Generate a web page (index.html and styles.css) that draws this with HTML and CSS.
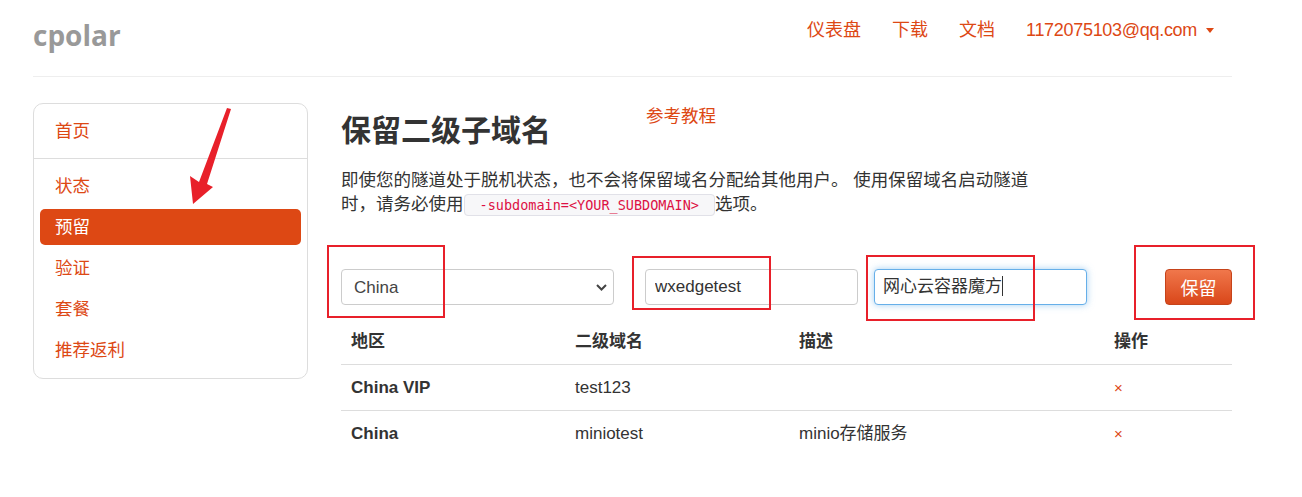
FILE: index.html
```html
<!DOCTYPE html>
<html lang="zh-CN">
<head>
  <meta charset="UTF-8" />
  <title>保留二级子域名 - cpolar</title>
  <link rel="stylesheet" href="styles.css">
</head>
<body>
  <div class="page">
    <header class="topbar">
      <a class="logo" href="#">cpolar</a>
      <nav class="topnav">
        <a href="#">仪表盘</a>
        <a href="#">下载</a>
        <a href="#">文档</a>
        <a href="#" class="user">1172075103@qq.com<span class="caret"></span></a>
      </nav>
    </header>

    <div class="layout">
      <aside class="sidebar">
        <ul>
          <li><a href="#">首页</a></li>
          <li class="divider"></li>
          <li><a href="#">状态</a></li>
          <li class="active"><a href="#">预留</a></li>
          <li><a href="#">验证</a></li>
          <li><a href="#">套餐</a></li>
          <li><a href="#">推荐返利</a></li>
        </ul>
      </aside>

      <main class="content">
        <div class="title-row">
          <h2>保留二级子域名</h2>
          <a class="help" href="#">参考教程</a>
        </div>
        <p class="lead">即使您的隧道处于脱机状态，也不会将保留域名分配给其他用户。 使用保留域名启动隧道时，请务必使用<code>-subdomain=&lt;YOUR_SUBDOMAIN&gt;</code>选项。</p>

        <form class="reserve-form">
          <div class="select-box">
            <select>
              <option>China</option>
              <option>China VIP</option>
            </select>
            <svg class="chevron" width="11" height="7" viewBox="0 0 11 7"><path d="M1 1l4.5 4.5L10 1" fill="none" stroke="#444" stroke-width="2"/></svg>
          </div>
          <input type="text" class="field field-name" value="wxedgetest" />
          <div class="field field-desc focused">网心云容器魔方<span class="cursor"></span></div>
          <button type="submit" class="btn">保留</button>
        </form>

        <table class="domains">
          <thead>
            <tr><th class="c-region">地区</th><th class="c-sub">二级域名</th><th class="c-desc">描述</th><th>操作</th></tr>
          </thead>
          <tbody>
            <tr><td class="strong">China VIP</td><td>test123</td><td></td><td><a class="del" href="#">×</a></td></tr>
            <tr><td class="strong">China</td><td>miniotest</td><td>minio存储服务</td><td><a class="del" href="#">×</a></td></tr>
          </tbody>
        </table>
      </main>
    </div>
  </div>

  <!-- annotations drawn over the screenshot -->
  <div class="mark mark-1"></div>
  <div class="mark mark-2"></div>
  <div class="mark mark-3"></div>
  <div class="mark mark-4"></div>
  <svg class="arrow" width="1302" height="497" viewBox="0 0 1302 497">
    <polygon points="227,108 231,109 207,184 213,187 193,204 190,176 199,182" fill="#e8202a"/>
  </svg>
</body>
</html>
```

FILE: styles.css
```css
body {
  margin: 0;
  font-family: "Liberation Sans", "Noto Sans CJK SC", sans-serif;
  color: #333;
  background: #fff;
  position: relative;
}
a {
  color: #dd4814;
  text-decoration: none;
}
.page {
  width: 1199px;
  margin-left: 33px;
}

/* top bar */
.topbar {
  height: 76px;
  border-bottom: 1px solid #eee;
  display: flex;
  justify-content: space-between;
  align-items: flex-start;
}
.logo {
  font-family: "Open Sans", sans-serif;
  font-weight: bold;
  font-size: 28px;
  line-height: 28px;
  color: #999;
  margin-top: 21px;
}
.topnav {
  display: flex;
  padding-top: 18px;
  padding-right: 18px;
  font-size: 18px;
  line-height: 24px;
}
.topnav a {
  margin-left: 31px;
}
.topnav .user {
  letter-spacing: -0.3px;
}
.caret {
  display: inline-block;
  width: 0;
  height: 0;
  border-left: 4px solid transparent;
  border-right: 4px solid transparent;
  border-top: 5px solid #dd4814;
  margin-left: 9px;
  vertical-align: 3px;
}

/* layout */
.layout {
  display: flex;
  margin-top: 26px;
  align-items: flex-start;
}
.sidebar {
  width: 273px;
  border: 1px solid #ddd;
  border-radius: 10px;
}
.sidebar ul {
  list-style: none;
  margin: 0;
  padding: 9px 6px 10px;
}
.sidebar li {
  margin-bottom: 5px;
}
.sidebar li:last-child {
  margin-bottom: 0;
}
.sidebar li a {
  display: block;
  height: 36px;
  line-height: 37px;
  padding-left: 15px;
  font-size: 17.5px;
  border-radius: 5px;
}
.sidebar li.active a {
  background: #dd4814;
  color: #fff;
}
.sidebar li.divider {
  height: 1px;
  background: #ddd;
  margin: 9px -6px;
}

.content {
  margin-left: 33px;
  width: 891px;
}
.title-row {
  display: flex;
  align-items: flex-start;
}
.title-row h2 {
  margin: 7px 0 0;
  font-family: "Noto Sans CJK SC", sans-serif;
  font-size: 30px;
  line-height: 36px;
  font-weight: bold;
  color: #333;
}
.help {
  margin-left: 95px;
  margin-top: 1px;
  font-size: 17.5px;
  line-height: 24px;
}
.lead {
  margin: 22px 0 0;
  max-width: 696px;
  font-size: 17.5px;
  line-height: 24px;
}
.lead code {
  font-family: "DejaVu Sans Mono", monospace;
  font-size: 13.5px;
  color: #dd1144;
  background: #f7f7f9;
  border: 1px solid #e1e1e8;
  border-radius: 4px;
  padding: 2px 15px;
}

/* form */
.reserve-form {
  display: flex;
  align-items: center;
  margin-top: 52px;
  height: 36px;
}
.select-box {
  position: relative;
  width: 273px;
  height: 36px;
}
.select-box select {
  width: 100%;
  height: 36px;
  appearance: none;
  -webkit-appearance: none;
  border: 1px solid #ccc;
  border-radius: 4px;
  background: #fff;
  padding: 0 12px;
  font-family: inherit;
  font-size: 17px;
  color: #444;
}
.chevron {
  position: absolute;
  right: 7px;
  top: 15px;
}
.field {
  box-sizing: border-box;
  width: 213px;
  height: 36px;
  border: 1px solid #ccc;
  border-radius: 4px;
  padding: 0 9px;
  font-family: inherit;
  font-size: 17px;
  color: #333;
  background: #fff;
}
.field-name {
  margin-left: 31px;
}
.field-desc {
  margin-left: 16px;
  line-height: 34px;
  padding-left: 8px;
}
.focused {
  border-color: #66afe9;
  box-shadow: 0 0 7px rgba(102, 175, 233, 0.6);
}
.cursor {
  display: inline-block;
  width: 1px;
  height: 20px;
  background: #333;
  vertical-align: -4px;
}
.btn {
  margin-left: auto;
  width: 67px;
  height: 36px;
  border: 1px solid #c6431a;
  border-radius: 4px;
  background: linear-gradient(to bottom, #f0774b, #d9471a);
  color: #fff;
  font-family: "Noto Sans CJK SC", sans-serif;
  font-size: 18px;
  cursor: pointer;
}

/* table */
.domains {
  width: 100%;
  margin-top: 14px;
  border-collapse: collapse;
  font-size: 17px;
}
.domains th, .domains td {
  text-align: left;
  padding: 10px;
  line-height: 25px;
}
.domains th {
  font-weight: bold;
  border-bottom: 1px solid #ddd;
}
.domains tbody tr + tr td {
  border-top: 1px solid #ddd;
}
.c-region, .c-sub {
  width: 204px;
}
.c-desc {
  width: 295px;
}
.domains td.strong {
  font-weight: bold;
}
.del {
  font-size: 15px;
}

/* red annotations */
.mark {
  position: absolute;
  border: 2px solid #e8202a;
  box-sizing: border-box;
}
.mark-1 { left: 327px; top: 245px; width: 118px; height: 73px; }
.mark-2 { left: 632px; top: 256px; width: 139px; height: 54px; }
.mark-3 { left: 866px; top: 255px; width: 169px; height: 66px; }
.mark-4 { left: 1134px; top: 245px; width: 121px; height: 75px; }
.arrow {
  position: absolute;
  left: 0;
  top: 0;
  pointer-events: none;
}
```
